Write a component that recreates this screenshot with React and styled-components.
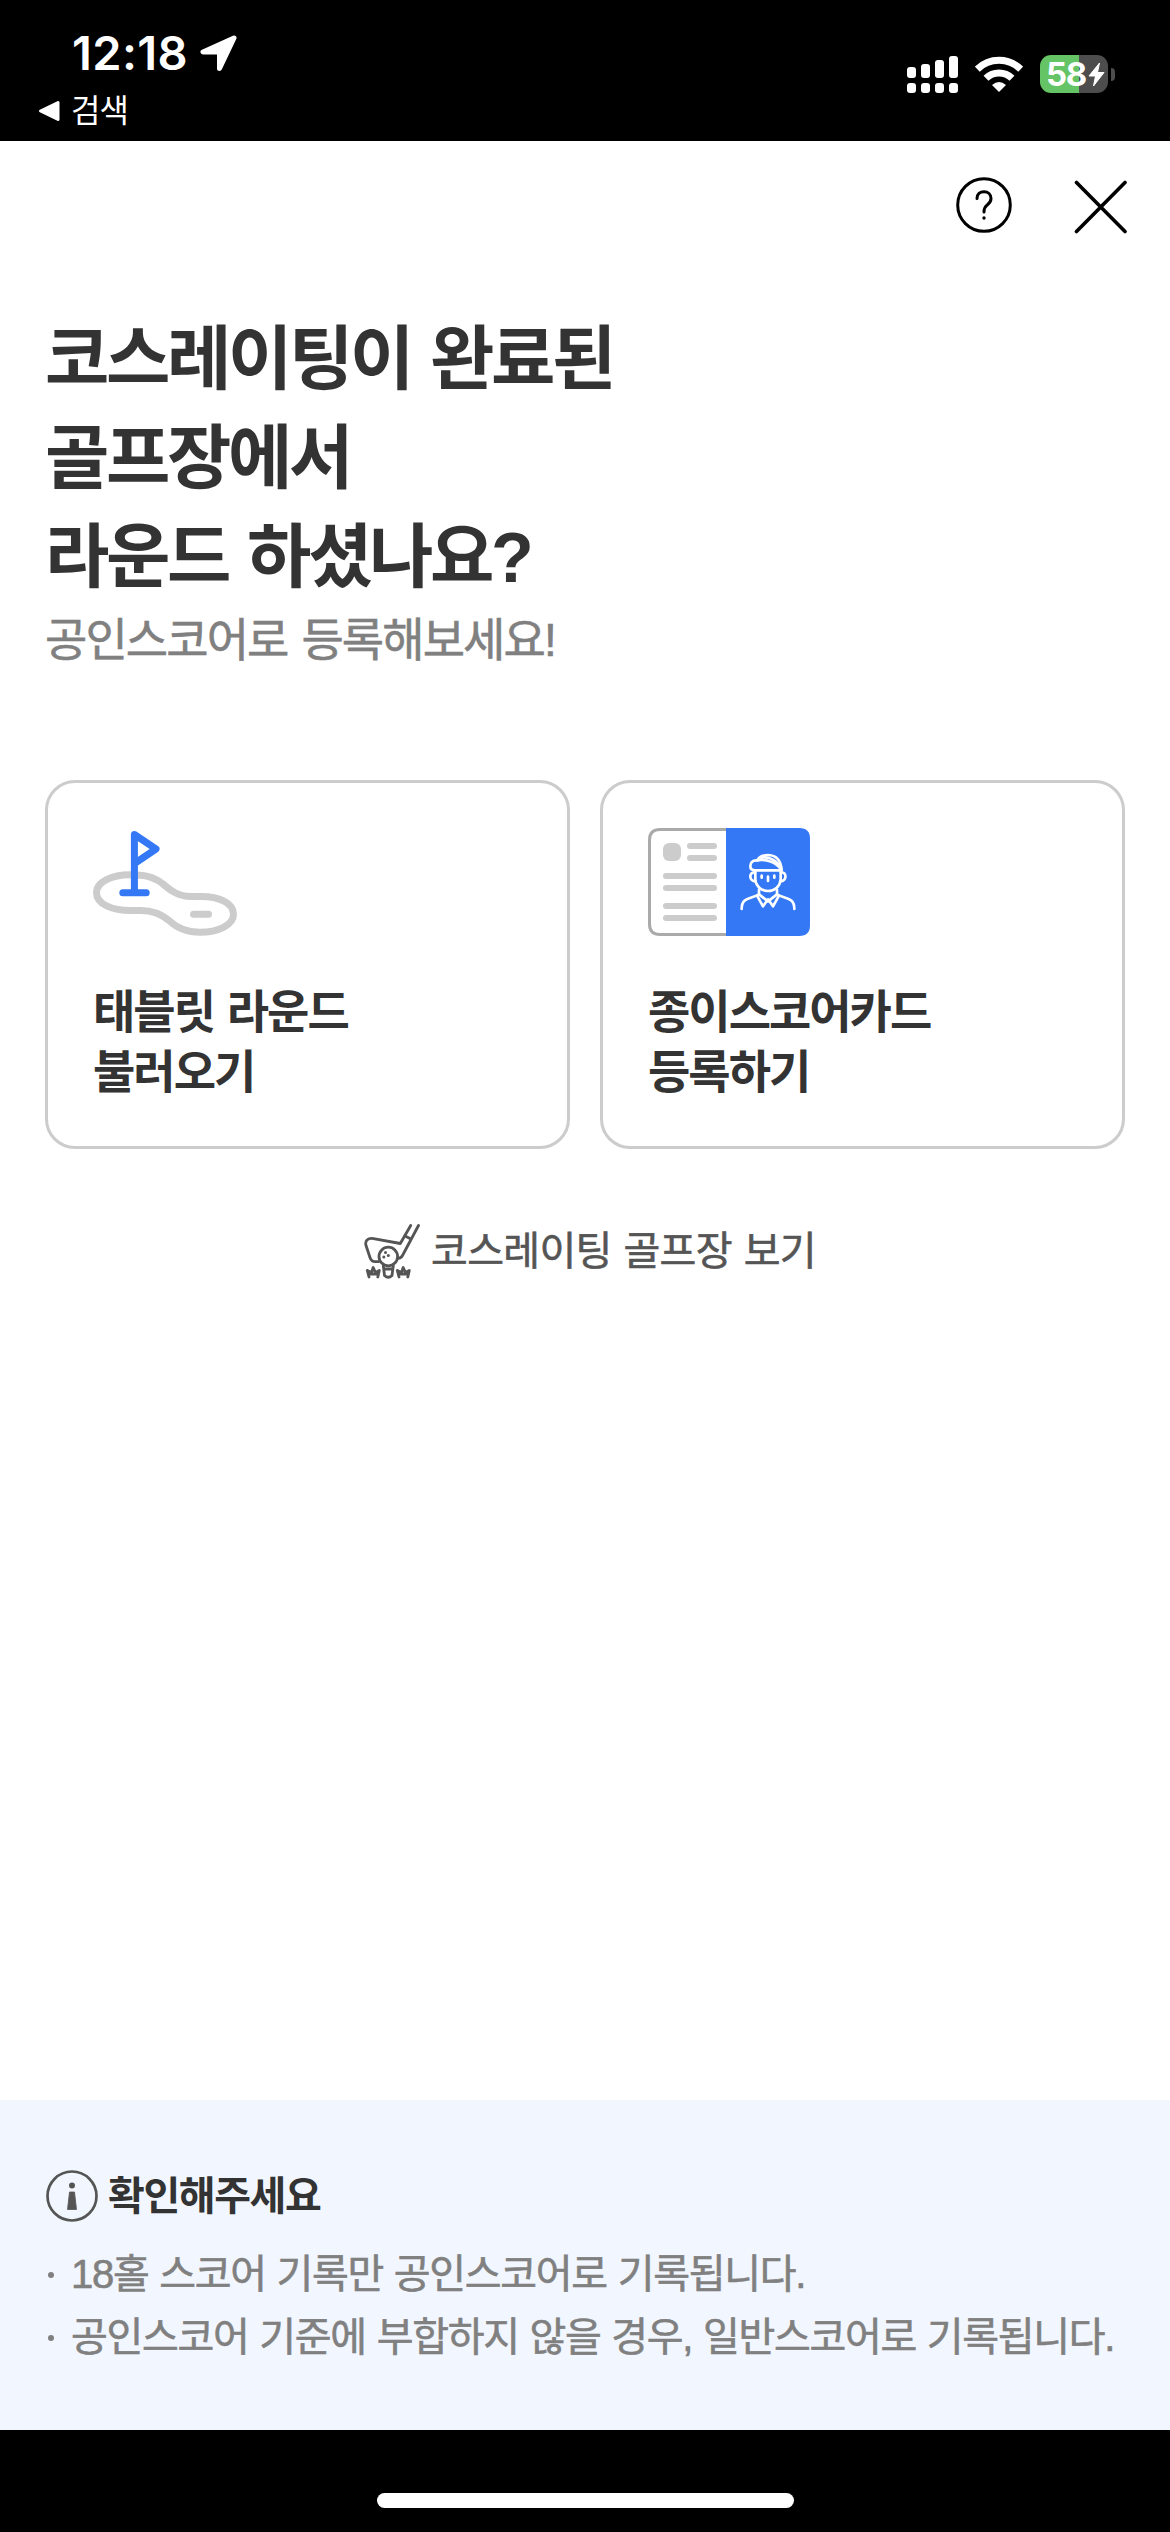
import React from 'react';
import styled, {createGlobalStyle} from 'styled-components';

const GlobalStyle = createGlobalStyle`
    * {
        box-sizing: border-box;
    }
    body {
        margin: 0;
        background-color: white;
        font-family: 'Liberation Sans', 'Noto Sans CJK KR', sans-serif;
    }
    svg {
        display: block;
        flex-shrink: 0;
    }
    h1, h2, p, ul {
        margin: 0;
        padding: 0;
    }
    button {
        font-family: inherit;
        background: none;
        border: none;
        margin: 0;
        padding: 0;
    }
`
const Page = styled.div`
    display: flex;
    flex-direction: column;
    width: 1170px;
    height: 2532px;
    overflow: hidden;
`
const StatusBar = styled.header`
    display: flex;
    justify-content: space-between;
    height: 141px;
    padding: 0 55px 0 38px;
    background-color: black;
    color: white;
`
const StatusLeft = styled.div`
    display: flex;
    flex-direction: column;
`
const TimeRow = styled.div`
    display: flex;
    align-items: center;
    gap: 12px;
    height: 36px;
    margin: 35px 0 0 34px;
`
const Time = styled.span`
    font-family: Inter, sans-serif;
    font-size: 47px;
    font-weight: 600;
    line-height: 36px;
    letter-spacing: 0.4px;
`
const BackRow = styled.div`
    display: flex;
    align-items: center;
    gap: 11px;
    height: 32px;
    margin-top: 24px;
`
const BackText = styled.span`
    font-size: 32px;
    line-height: 32px;
    letter-spacing: -1px;
`
const StatusRight = styled.div`
    display: flex;
    align-items: center;
    height: 38px;
    margin-top: 55px;
`
const Battery = styled.div`
    display: flex;
    align-items: center;
    justify-content: center;
    gap: 2px;
    width: 68px;
    height: 38px;
    margin: 0 3px 0 17px;
    padding-left: 3px;
    border-radius: 11px;
    background: linear-gradient(to right, #65c466 39px, #4d4d4d 39px);
    font-family: Inter, sans-serif;
    font-size: 33px;
    font-weight: 700;
    line-height: 38px;
    letter-spacing: -1.2px;
`
const BatteryTip = styled.div`
    width: 4px;
    height: 13px;
    border-radius: 0 4px 4px 0;
    background-color: #4d4d4d;
`
const Toolbar = styled.nav`
    display: flex;
    justify-content: flex-end;
    align-items: flex-start;
    gap: 62px;
    height: 131px;
    padding: 36px 42px 0 0;
`
const CloseButton = styled.button`
    padding-top: 3px;
`
const Main = styled.main`
    display: flex;
    flex-direction: column;
    flex: 1;
    padding: 39px 45px 0;
`
const Title = styled.h1`
    font-size: 70px;
    font-weight: 700;
    line-height: 99px;
    letter-spacing: -3.4px;
    word-spacing: 3px;
    color: #333;
`
const Subtitle = styled.p`
    margin-top: 2px;
    font-size: 46px;
    line-height: 60px;
    letter-spacing: -1.9px;
    word-spacing: 3px;
    color: #808080;
    -webkit-text-stroke: 0.6px #808080;
`
const Cards = styled.div`
    display: grid;
    grid-template-columns: 1fr 1fr;
    gap: 30px;
    margin-top: 110px;
`
const Card = styled.button`
    display: flex;
    flex-direction: column;
    align-items: flex-start;
    gap: 46px;
    height: 369px;
    padding: 45px;
    border: 3px solid #ccc;
    border-radius: 30px;
    text-align: left;
`
const CardLabel = styled.span`
    font-size: 46px;
    font-weight: 700;
    line-height: 60px;
    letter-spacing: -2px;
    word-spacing: 2px;
    color: #333;
`
const CourseLink = styled.button`
    display: flex;
    align-items: center;
    align-self: center;
    gap: 10px;
    height: 60px;
    margin-top: 72px;
    padding-left: 10px;
    font-size: 40px;
    line-height: 60px;
    letter-spacing: -0.7px;
    word-spacing: 1.5px;
    color: #555;
    -webkit-text-stroke: 0.6px #555;
`
const Notice = styled.section`
    height: 330px;
    padding: 66px 45px 0;
    background-color: #f2f6fe;
`
const NoticeTitle = styled.h2`
    display: flex;
    align-items: center;
    gap: 9px;
    height: 60px;
    font-size: 40px;
    font-weight: 700;
    line-height: 60px;
    letter-spacing: -1.4px;
    color: #333;
`
const NoticeList = styled.ul`
    margin-top: 17px;
    list-style: none;
`
const NoticeItem = styled.li`
    display: flex;
    align-items: center;
    gap: 17px;
    height: 63px;
    padding-left: 3px;
    font-size: 40px;
    line-height: 63px;
    letter-spacing: -1.3px;
    word-spacing: 1px;
    white-space: nowrap;
    color: #808080;
    -webkit-text-stroke: 0.6px #808080;
    &::before {
        content: '';
        width: 6px;
        height: 6px;
        border-radius: 50%;
        background-color: #808080;
    }
`
const HomeBar = styled.footer`
    display: flex;
    justify-content: center;
    height: 102px;
    padding-top: 63px;
    background-color: black;
`
const HomeIndicator = styled.div`
    width: 417px;
    height: 15px;
    border-radius: 8px;
    background-color: white;
`

const LocationIcon = () => (
    <svg width='37' height='37' viewBox='0 0 37 37' fill='white' stroke='white' strokeWidth='5' strokeLinejoin='round'>
        <path d='M34 3L3 17H19.500V33.500Z' />
    </svg>
)

const BackIcon = () => (
    <svg width='22' height='22' viewBox='0 0 22 22' fill='white' stroke='white' strokeWidth='3' strokeLinejoin='round'>
        <path d='M2.500 11L20 2.500V19.500Z' />
    </svg>
)

const bars = [{x: 0, y: 11}, {x: 14, y: 8}, {x: 28, y: 4}, {x: 42, y: 0}]

const SignalIcon = () => (
    <svg width='51' height='37' viewBox='0 0 51 37' fill='white'>
        {bars.map(bar => (
            <g key={bar.x}>
                <rect x={bar.x} y={bar.y} width='9' height={22 - bar.y} rx='3' />
                <rect x={bar.x} y='27' width='9' height='10' rx='3' />
            </g>
        ))}
    </svg>
)

const Wifi = styled.svg`
    margin-left: 17px;
`

const WifiIcon = () => (
    <Wifi width='48' height='37' viewBox='0 0 48 37'>
        <g fill='none' stroke='white' strokeWidth='7'>
            <path d='M2.300 13.200A31 31 0 0 1 45.700 13.200' />
            <path d='M11 22.300A18.500 18.500 0 0 1 37 22.300' />
        </g>
        <path d='M17 29Q24 23 31 29L24 36Z' fill='white' />
    </Wifi>
)

const BoltIcon = () => (
    <svg width='17' height='25' viewBox='0 0 17 25' fill='white' stroke='white' strokeWidth='1' strokeLinejoin='round'>
        <path d='M11.500 1L1 14H7.500L5.500 24L16 10.500H9.500Z' />
    </svg>
)

const HelpIcon = () => (
    <svg width='56' height='56' viewBox='0 0 56 56' fill='none' stroke='black' strokeWidth='3' strokeLinecap='round'>
        <circle cx='28' cy='28' r='26.300' />
        <path d='M21 21.500C21 17 24 14.800 28 14.800C32 14.800 35 17.500 35 21.500C35 24.500 33.500 26.300 31 28.200C28.800 30 28 31.500 28 35' />
        <circle cx='28' cy='41' r='1.700' fill='black' stroke='none' />
    </svg>
)

const CloseIcon = () => (
    <svg width='54' height='54' viewBox='0 0 54 54' stroke='black' strokeWidth='3.600' strokeLinecap='round'>
        <path d='M2.500 2.500L51 51.500M51 2.500L2.500 51.500' />
    </svg>
)

const CourseIcon = () => (
    <svg width='144' height='108' viewBox='0 0 144 108' fill='none' strokeWidth='7' strokeLinecap='round' strokeLinejoin='round'>
        <g stroke='#ccc'>
            <path d='M3.500 64.700C3.500 54 19 46.800 37 46.800C50 46.800 60 48 70 56C77 62 85 68.500 97.700 68.500H108C126 68.500 140.500 75 140.500 86.300C140.500 97 125 104.300 107 104.300C95 104.300 85 101 76 92.500C67 85 59 82.500 48 82.500H38C19 82.500 3.500 76 3.500 64.700Z' />
            <path d='M100.500 86.300H115.500' />
        </g>
        <path d='M29.800 64.700H53.200M41.400 64V6.500L63 21L43 34.500' stroke='#3478f6' />
    </svg>
)

const ScoreCardIcon = () => (
    <svg width='162' height='108' viewBox='0 0 486 324' fill='none' strokeLinecap='round' strokeLinejoin='round'>
        <path d='M234 4.500H36Q4.500 4.500 4.500 36V288Q4.500 319.500 36 319.500H234' stroke='#aaa' strokeWidth='9' />
        <path d='M234 0H454Q486 0 486 32V292Q486 324 454 324H234Z' fill='#3478f6' />
        <rect x='45' y='45' width='54' height='54' rx='18' fill='#ccc' />
        <path d='M126 54H198M126 90H198M54 144H198M54 180H198M54 234H198M54 270H198' stroke='#ccc' strokeWidth='18' />
        <g stroke='white' strokeWidth='8'>
            <path d='M321 127H401C399 98 386 82 361 81C344 81 333 88 328 97C311 96 307 106 307 115C307 122 312 127 321 127Z' />
            <path d='M328 97C355 92 383 103 400 125M340 89C366 84 390 100 400 125' />
            <path d='M322 128V155C324 176 342 189 360 189C379 189 396 176 398 155V128' />
            <path d='M321 133C302 131 302 160 323 160M399 133C417 131 417 160 397 160' />
            <path d='M341 143V149M379 143V149M360 146V159' />
            <path d='M333 185V199L360 220L387 199V185' />
            <path d='M327 203L345 235L360 214L375 235L393 203' />
            <path d='M281 243C281 207 306 214 333 199M439 243C439 207 414 214 387 199' />
        </g>
    </svg>
)

const GolfClubIcon = () => (
    <svg width='57' height='55' viewBox='0 0 57 55' fill='none' stroke='#555' strokeWidth='2.800' strokeLinecap='round' strokeLinejoin='round'>
        <path d='M46.700 1.500L36.300 19.500L9.500 14.600C3.500 13.700 .8 17 2 21.500L6 33.500C7 36.500 8.500 37.700 11 37.700H14.500' />
        <path d='M54.500 1.500L38.500 31.500Q37.200 34 34 34.400M41 12L46 14.500' />
        <circle cx='24.300' cy='32.500' r='9.300' />
        <path d='M19.300 41.500L20.500 51.500Q24.300 55 28 51.500L29.300 41.500M21 45H27.500' />
        <path d='M3.300 46.500L5 53M3.300 46.500L7.500 48.500L9.200 43.500L11.500 48.500L15.300 46.500L13.800 53M5.500 50H13.500' />
        <path d='M33.300 46.500L35 53M33.300 46.500L37.500 48.500L39.200 43.500L41.500 48.500L45.300 46.500L43.800 53M35.500 50H43.500' />
        <g fill='#555' stroke='none'>
            <circle cx='21.500' cy='28.500' r='1.500' />
            <circle cx='24.300' cy='31.500' r='1.500' />
            <circle cx='19.800' cy='33' r='1.500' />
        </g>
    </svg>
)

const InfoIcon = () => (
    <svg width='54' height='54' viewBox='0 0 54 54' fill='#555'>
        <circle cx='27' cy='27' r='24.500' fill='none' stroke='#555' strokeWidth='2.700' />
        <circle cx='27' cy='16.500' r='3' />
        <path d='M24.500 23H29.500L31.500 40.500H22.500Z' stroke='#555' strokeWidth='.8' strokeLinejoin='round' />
    </svg>
)

const notices = [
    '18홀 스코어 기록만 공인스코어로 기록됩니다.',
    '공인스코어 기준에 부합하지 않을 경우, 일반스코어로 기록됩니다.'
]

export default function App() {
    return (
        <Page>
            <GlobalStyle />
            <StatusBar>
                <StatusLeft>
                    <TimeRow>
                        <Time>12:18</Time>
                        <LocationIcon />
                    </TimeRow>
                    <BackRow>
                        <BackIcon />
                        <BackText>검색</BackText>
                    </BackRow>
                </StatusLeft>
                <StatusRight>
                    <SignalIcon />
                    <WifiIcon />
                    <Battery>
                        58
                        <BoltIcon />
                    </Battery>
                    <BatteryTip />
                </StatusRight>
            </StatusBar>
            <Toolbar>
                <button>
                    <HelpIcon />
                </button>
                <CloseButton>
                    <CloseIcon />
                </CloseButton>
            </Toolbar>
            <Main>
                <Title>
                    코스레이팅이 완료된<br />
                    골프장에서<br />
                    라운드 하셨나요?
                </Title>
                <Subtitle>공인스코어로 등록해보세요!</Subtitle>
                <Cards>
                    <Card>
                        <CourseIcon />
                        <CardLabel>태블릿 라운드<br />불러오기</CardLabel>
                    </Card>
                    <Card>
                        <ScoreCardIcon />
                        <CardLabel>종이스코어카드<br />등록하기</CardLabel>
                    </Card>
                </Cards>
                <CourseLink>
                    <GolfClubIcon />
                    코스레이팅 골프장 보기
                </CourseLink>
            </Main>
            <Notice>
                <NoticeTitle>
                    <InfoIcon />
                    확인해주세요
                </NoticeTitle>
                <NoticeList>
                    {notices.map(text => <NoticeItem key={text}>{text}</NoticeItem>)}
                </NoticeList>
            </Notice>
            <HomeBar>
                <HomeIndicator />
            </HomeBar>
        </Page>
    )
}
